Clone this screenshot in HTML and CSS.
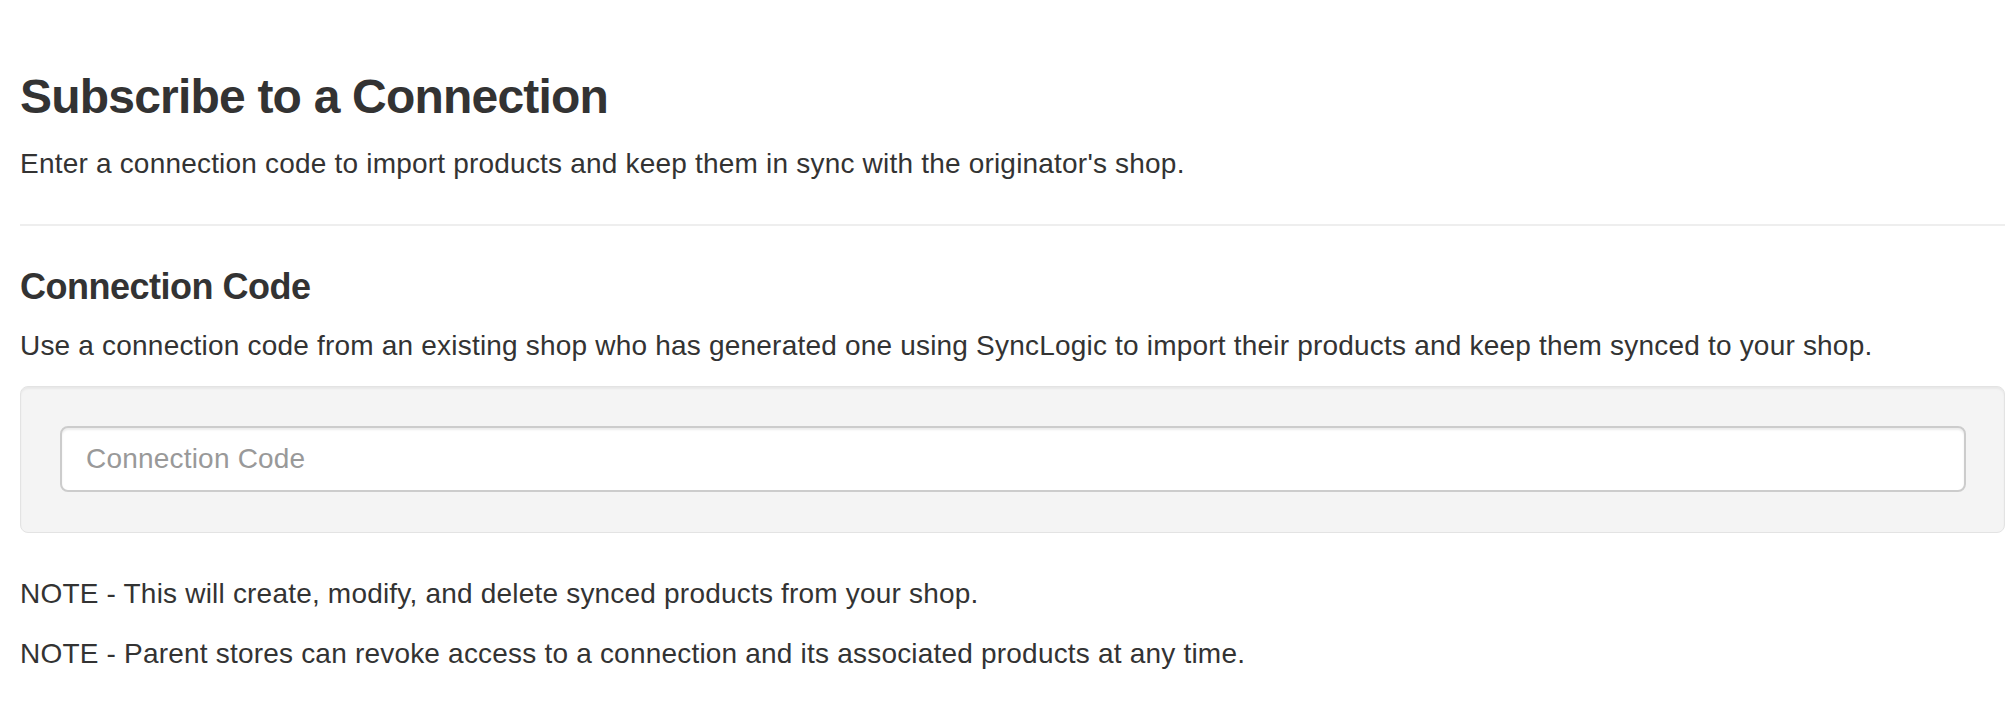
FILE: index.html
```
<!DOCTYPE html>
<html lang="en">
<head>
    <meta charset="UTF-8">
    <meta name="viewport" content="width=device-width, initial-scale=1.0">
    <title>Subscribe to a Connection</title>
    <link rel="stylesheet" href="styles.css">
</head>
<body>
    <div class="page">
        <h1>Subscribe to a Connection</h1>
        <p class="lead">Enter a connection code to import products and keep them in sync with the originator's shop.</p>
        <hr>
        <h2>Connection Code</h2>
        <p>Use a connection code from an existing shop who has generated one using SyncLogic to import their products and keep them synced to your shop.</p>
        <div class="well">
            <input type="text" class="form-control" placeholder="Connection Code">
        </div>
        <p>NOTE - This will create, modify, and delete synced products from your shop.</p>
        <p>NOTE - Parent stores can revoke access to a connection and its associated products at any time.</p>
    </div>
</body>
</html>
```

FILE: styles.css
```
body { margin: 0; background: #fff; color: #333; font-family: "Liberation Sans", Arial, sans-serif; font-size: 28px; line-height: 40px; letter-spacing: 0.2px; }
.page { padding: 71px 1px 0 20px; }
h1 { font-size: 48px; line-height: 1.1; font-weight: bold; letter-spacing: -0.8px; margin: 0 0 20px; }
h2 { font-size: 36px; line-height: 1.1; font-weight: bold; letter-spacing: -0.5px; margin: 0 0 20px; }
p { margin: 0 0 20px; }
.lead { margin-bottom: 40px; }
hr { border: 0; border-top: 2px solid #eee; margin: 0 0 41px; }
.well { background: #f4f4f4; border: 1px solid #e3e3e3; border-radius: 8px; box-shadow: inset 0 2px 2px rgba(0, 0, 0, 0.05); padding: 39px 38px 40px 39px; margin: 16px 0 41px; }
.form-control { display: block; width: 100%; height: 66px; box-sizing: border-box; padding: 0 24px; font-family: inherit; font-size: 28px; letter-spacing: 0.2px; color: #555; background: #fff; border: 2px solid #ccc; border-radius: 8px; box-shadow: inset 0 2px 2px rgba(0, 0, 0, 0.075); outline: none; }
.form-control::placeholder { color: #999; }
```
